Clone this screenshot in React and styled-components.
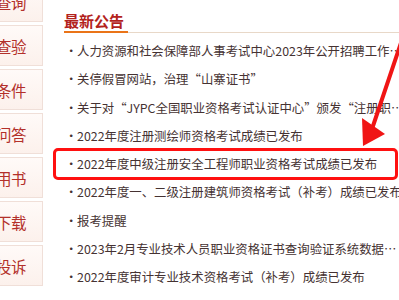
import React from "react";
import styled, { createGlobalStyle } from "styled-components";

const Global = createGlobalStyle`
  html, body { margin: 0; padding: 0; background: #fff; overflow: hidden; }
  body { font-family: "Noto Sans CJK SC", "Noto Sans", sans-serif; }
`;

const Page = styled.div`
  position: relative;
  width: 399px;
  height: 300px;
  overflow: hidden;
  display: flex;
  align-items: flex-start;
`;

const Sidebar = styled.nav`
  width: 43px;
  flex: none;
  margin-top: -19px;
  display: flex;
  flex-direction: column;
  gap: 3px;
`;

const SideItem = styled.div`
  height: 41px;
  box-sizing: border-box;
  background: linear-gradient(#fffaf8, #fcf1ec);
  border: 1px solid #f0dfd8;
  border-left: none;
  display: flex;
  align-items: center;
  justify-content: flex-end;
  padding-right: 16px;
  overflow: hidden;
  white-space: nowrap;
  color: #b3302a;
  font-size: 15.5px;
  letter-spacing: -0.5px;
`;

const Main = styled.main`
  flex: 1;
  min-width: 0;
  padding-left: 21px;
  padding-top: 10px;
`;

const HeadingBar = styled.div`
  display: flex;
  border-bottom: 1px solid #e8d8c8;
`;

const Title = styled.h2`
  margin: 0 0 -1px 0;
  padding: 0 4px 0 0;
  font-size: 15px;
  line-height: 21px;
  font-weight: 700;
  color: #b3221c;
  border-bottom: 2px solid #ea7418;
`;

const List = styled.ul`
  list-style: none;
  margin: 0;
  padding: 4px 0 0 0;
`;

const Row = styled.li`
  position: relative;
  height: 28.25px;
  display: flex;
  align-items: center;
  white-space: nowrap;
  font-size: 12.4px;
  color: #453232;
`;

const Bullet = styled.span`
  width: 12px;
  flex: none;
  padding-left: 1px;
`;

const Text = styled.span`
  overflow: hidden;
  white-space: nowrap;
`;

const Highlight = styled.span`
  position: absolute;
  left: -11px;
  right: 1px;
  top: -2px;
  bottom: -2px;
  border: 3px solid #ff1010;
  border-radius: 5px;
  pointer-events: none;
`;

const Arrow = styled.svg`
  position: absolute;
  left: 355px;
  top: 30px;
  width: 50px;
  height: 120px;
`;

const sideItems = ["查询", "查验", "条件", "问答", "用书", "下载", "投诉"];

const news = [
  "人力资源和社会保障部人事考试中心2023年公开招聘工作…",
  "关停假冒网站，治理“山寨证书”",
  "关于对“JYPC全国职业资格考试认证中心”颁发“注册职…",
  "2022年度注册测绘师资格考试成绩已发布",
  "2022年度中级注册安全工程师职业资格考试成绩已发布",
  "2022年度一、二级注册建筑师资格考试（补考）成绩已发布",
  "报考提醒",
  "2023年2月专业技术人员职业资格证书查询验证系统数据…",
  "2022年度审计专业技术资格考试（补考）成绩已发布",
];

export default function App() {
  return (
    <>
      <Global />
      <Page>
        <Sidebar>
          {sideItems.map((t) => (
            <SideItem key={t}>{t}</SideItem>
          ))}
        </Sidebar>
        <Main>
          <HeadingBar>
            <Title>最新公告</Title>
          </HeadingBar>
          <List>
            {news.map((t, i) => (
              <Row key={i}>
                <Bullet>·</Bullet>
                <Text>{t}</Text>
                {i === 4 && <Highlight />}
              </Row>
            ))}
          </List>
        </Main>
        <Arrow viewBox="0 0 50 120">
          <line x1="49" y1="4" x2="18" y2="96" stroke="#f01515" strokeWidth="4" strokeLinecap="round" />
          <polygon points="8,116 7,88 30,104" fill="#f01515" />
        </Arrow>
      </Page>
    </>
  );
}
